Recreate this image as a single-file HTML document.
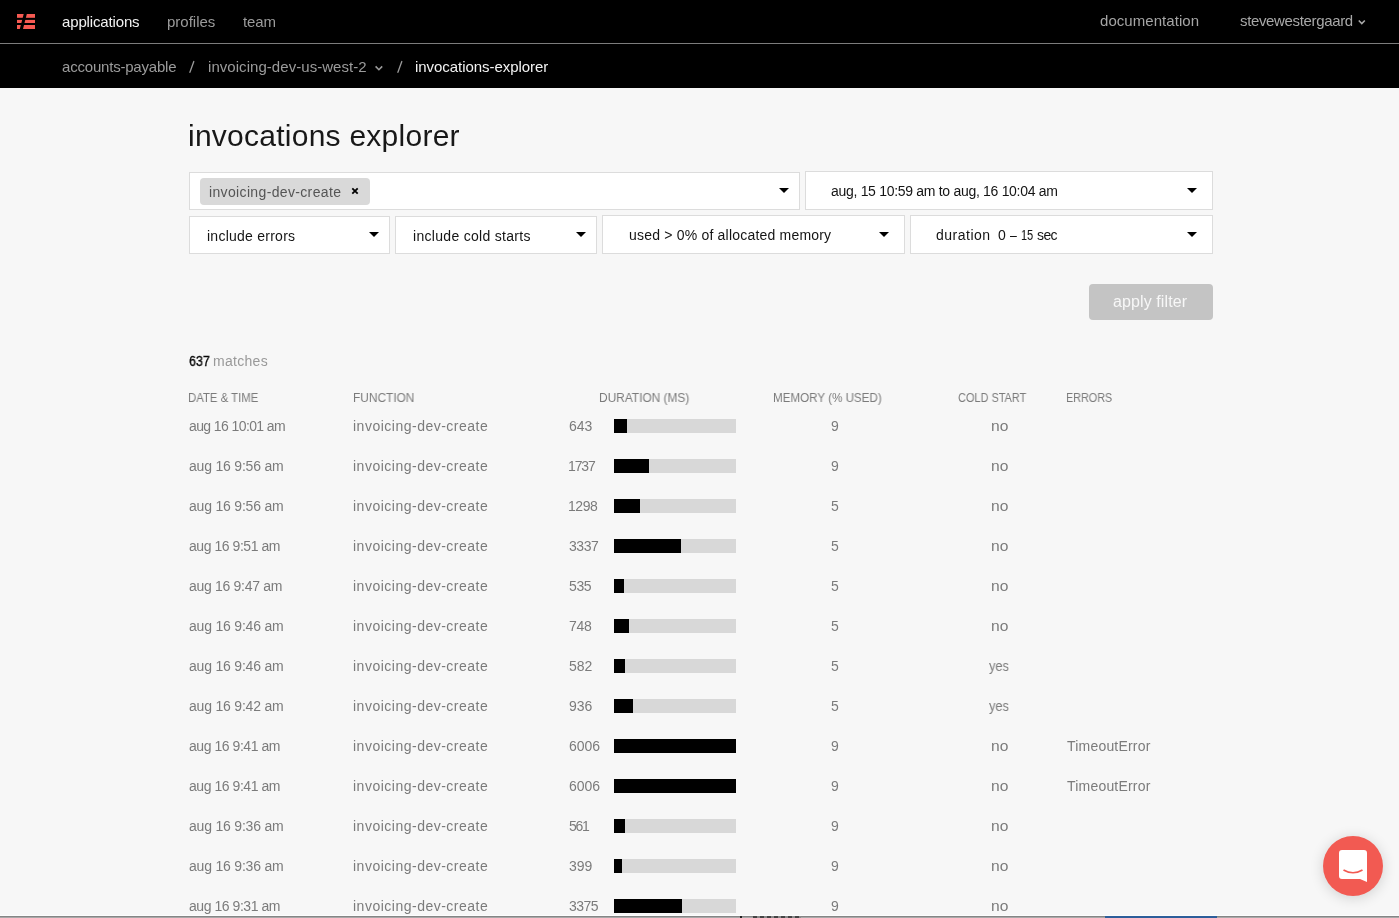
<!DOCTYPE html>
<html><head><meta charset="utf-8"><title>invocations explorer</title>
<style>
html,body{margin:0;padding:0;}
body{width:1399px;height:918px;position:relative;overflow:hidden;background:#f7f7f7;font-family:"Liberation Sans",sans-serif;}
.t{position:absolute;white-space:nowrap;will-change:transform;}
.box{position:absolute;background:#fff;border:1px solid #dcdcdc;box-sizing:border-box;}
.arr{position:absolute;width:0;height:0;border-left:5px solid transparent;border-right:5px solid transparent;border-top:5.5px solid #000;}
.bar{position:absolute;left:614px;width:122px;height:14px;background:#d8d8d8;}
.bar i{position:absolute;left:0;top:0;bottom:0;background:#000;}
</style></head><body>
<div style="position:absolute;left:0;top:0;width:1399px;height:88px;background:#000"></div>
<div style="position:absolute;left:0;top:43px;width:1399px;height:1px;background:#7c7c7c"></div>
<svg style="position:absolute;left:17px;top:14px" width="18" height="15" viewBox="0 0 18 15">
<rect x="0" y="0" width="18" height="3.8" fill="#f65a52"/>
<rect x="0" y="5.9" width="18" height="3.1" fill="#f65a52"/>
<rect x="0" y="11" width="18" height="4" fill="#f65a52"/>
<polygon points="6.7,0 9.8,0 6.0,15 2.8,15" fill="#000"/>
</svg>
<svg style="position:absolute;left:1357px;top:19px" width="9" height="6" viewBox="0 0 9 6"><polyline points="1.8,1.5 4.8,4.6 7.8,1.5" fill="none" stroke="#a8a8a8" stroke-width="1.6"/></svg>
<svg style="position:absolute;left:374.2px;top:65.1px" width="10" height="7" viewBox="0 0 10 7"><polyline points="1.6,1.4 4.9,4.7 8.2,1.4" fill="none" stroke="#9b9b9b" stroke-width="1.6"/></svg>
<svg style="position:absolute;left:189px;top:60px" width="7" height="14" viewBox="0 0 7 14"><line x1="0.9" y1="12.3" x2="4.8" y2="1.5" stroke="#9b9b9b" stroke-width="1.3" stroke-linecap="round"/></svg>
<svg style="position:absolute;left:397px;top:60px" width="7" height="14" viewBox="0 0 7 14"><line x1="0.9" y1="12.3" x2="4.8" y2="1.5" stroke="#9b9b9b" stroke-width="1.3" stroke-linecap="round"/></svg>
<div class="box" style="left:189px;top:172px;width:611px;height:38px"></div>
<div class="box" style="left:805px;top:171px;width:408px;height:39px"></div>
<div class="box" style="left:189px;top:216px;width:201px;height:38px"></div>
<div class="box" style="left:395px;top:216px;width:202px;height:38px"></div>
<div class="box" style="left:602px;top:215px;width:303px;height:39px"></div>
<div class="box" style="left:910px;top:215px;width:303px;height:39px"></div>
<div style="position:absolute;left:200px;top:178px;width:170px;height:27px;background:#d9d9d9;border-radius:4px"></div>
<svg style="position:absolute;left:351px;top:187px" width="8" height="8" viewBox="0 0 8 8"><path d="M1.3,1.3 L6.7,6.7 M6.7,1.3 L1.3,6.7" stroke="#000" stroke-width="1.8"/></svg>
<div class="arr" style="left:779px;top:188px"></div>
<div class="arr" style="left:1187px;top:188px"></div>
<div class="arr" style="left:369px;top:232px"></div>
<div class="arr" style="left:576px;top:232px"></div>
<div class="arr" style="left:879px;top:232px"></div>
<div class="arr" style="left:1187px;top:232px"></div>
<div style="position:absolute;left:1089px;top:284px;width:124px;height:36px;background:#c4c4c4;border-radius:4px"></div>
<div class="bar" style="top:419px"><i style="width:13px"></i></div>
<div class="bar" style="top:459px"><i style="width:35px"></i></div>
<div class="bar" style="top:499px"><i style="width:26px"></i></div>
<div class="bar" style="top:539px"><i style="width:67px"></i></div>
<div class="bar" style="top:579px"><i style="width:10px"></i></div>
<div class="bar" style="top:619px"><i style="width:15px"></i></div>
<div class="bar" style="top:659px"><i style="width:11px"></i></div>
<div class="bar" style="top:699px"><i style="width:19px"></i></div>
<div class="bar" style="top:739px"><i style="width:122px"></i></div>
<div class="bar" style="top:779px"><i style="width:122px"></i></div>
<div class="bar" style="top:819px"><i style="width:11px"></i></div>
<div class="bar" style="top:859px"><i style="width:8px"></i></div>
<div class="bar" style="top:899px"><i style="width:68px"></i></div>
<div class="t" style="left:62.00px;top:14.25px;font-size:15px;line-height:15px;color:#f2f2f2;letter-spacing:-0.150px;">applications</div>
<div class="t" style="left:167.00px;top:14.25px;font-size:15px;line-height:15px;color:#9b9b9b;">profiles</div>
<div class="t" style="left:243.00px;top:14.25px;font-size:15px;line-height:15px;color:#9b9b9b;letter-spacing:-0.100px;">team</div>
<div class="t" style="left:1100.00px;top:13.25px;font-size:15px;line-height:15px;color:#a5a5a5;letter-spacing:0.050px;">documentation</div>
<div class="t" style="left:1240.00px;top:13.25px;font-size:15px;line-height:15px;color:#a8a8a8;letter-spacing:-0.350px;">stevewestergaard</div>
<div class="t" style="left:62.00px;top:59.25px;font-size:15px;line-height:15px;color:#9b9b9b;letter-spacing:-0.200px;">accounts-payable</div>
<div class="t" style="left:208.00px;top:59.25px;font-size:15px;line-height:15px;color:#9b9b9b;letter-spacing:0.050px;">invoicing-dev-us-west-2</div>
<div class="t" style="left:415.00px;top:59.25px;font-size:15px;line-height:15px;color:#f2f2f2;letter-spacing:-0.050px;">invocations-explorer</div>
<div class="t" style="left:188.00px;top:120.50px;font-size:30px;line-height:30px;color:#181818;letter-spacing:0.250px;">invocations explorer</div>
<div class="t" style="left:209.00px;top:185.10px;font-size:14px;line-height:14px;color:#555;letter-spacing:0.350px;">invoicing-dev-create</div>
<div class="t" style="left:831.00px;top:184.10px;font-size:14px;line-height:14px;color:#141414;letter-spacing:-0.300px;">aug, 15 10:59 am to aug, 16 10:04 am</div>
<div class="t" style="left:207.00px;top:229.10px;font-size:14px;line-height:14px;color:#141414;letter-spacing:0.250px;">include errors</div>
<div class="t" style="left:413.00px;top:229.10px;font-size:14px;line-height:14px;color:#141414;letter-spacing:0.300px;">include cold starts</div>
<div class="t" style="left:629.00px;top:228.10px;font-size:14px;line-height:14px;color:#141414;letter-spacing:0.200px;">used &gt; 0% of allocated memory</div>
<div class="t" style="left:936.00px;top:228.10px;font-size:14px;line-height:14px;color:#141414;letter-spacing:0.500px;">duration</div>
<div class="t" style="left:998.00px;top:228.10px;font-size:14px;line-height:14px;color:#141414;">0</div>
<div class="t" style="left:1010.00px;top:228.10px;font-size:14px;line-height:14px;color:#141414;transform:scaleX(0.8875);transform-origin:0 0;">–</div>
<div class="t" style="left:1021.00px;top:228.10px;font-size:14px;line-height:14px;color:#141414;transform:scaleX(0.7786);transform-origin:0 0;">15</div>
<div class="t" style="left:1037.00px;top:228.10px;font-size:14px;line-height:14px;color:#141414;letter-spacing:-0.600px;">sec</div>
<div class="t" style="left:1113.00px;top:294.00px;font-size:16px;line-height:16px;color:#f7f7f7;letter-spacing:0.100px;">apply filter</div>
<div class="t" style="left:189.00px;top:354.10px;font-size:14px;line-height:14px;color:#050505;-webkit-text-stroke:0.3px #050505;transform:scaleX(0.8957);transform-origin:0 0;">637</div>
<div class="t" style="left:213.00px;top:354.10px;font-size:14px;line-height:14px;color:#999;letter-spacing:0.300px;">matches</div>
<div class="t" style="left:188.00px;top:391.80px;font-size:12px;line-height:12px;color:#7b7b7b;transform:scaleX(0.9466);transform-origin:0 0;">DATE &amp; TIME</div>
<div class="t" style="left:353.00px;top:391.80px;font-size:12px;line-height:12px;color:#7b7b7b;transform:scaleX(0.9900);transform-origin:0 0;">FUNCTION</div>
<div class="t" style="left:599.00px;top:391.80px;font-size:12px;line-height:12px;color:#7b7b7b;transform:scaleX(0.9922);transform-origin:0 0;">DURATION (MS)</div>
<div class="t" style="left:773.00px;top:391.80px;font-size:12px;line-height:12px;color:#7b7b7b;transform:scaleX(0.9685);transform-origin:0 0;">MEMORY (% USED)</div>
<div class="t" style="left:958.00px;top:391.80px;font-size:12px;line-height:12px;color:#7b7b7b;transform:scaleX(0.9120);transform-origin:0 0;">COLD START</div>
<div class="t" style="left:1066.00px;top:391.80px;font-size:12px;line-height:12px;color:#7b7b7b;transform:scaleX(0.9000);transform-origin:0 0;">ERRORS</div>
<div class="t" style="left:189.00px;top:419.10px;font-size:14px;line-height:14px;color:#7b7b7b;letter-spacing:-0.600px;">aug 16 10:01 am</div>
<div class="t" style="left:353.00px;top:419.10px;font-size:14px;line-height:14px;color:#7b7b7b;letter-spacing:0.500px;">invoicing-dev-create</div>
<div class="t" style="left:569.00px;top:419.10px;font-size:14px;line-height:14px;color:#7b7b7b;">643</div>
<div class="t" style="left:831.00px;top:419.10px;font-size:14px;line-height:14px;color:#7b7b7b;">9</div>
<div class="t" style="left:991.00px;top:418.25px;font-size:15px;line-height:15px;color:#7b7b7b;transform:scaleX(1.0400);transform-origin:0 0;">no</div>
<div class="t" style="left:189.00px;top:459.10px;font-size:14px;line-height:14px;color:#7b7b7b;letter-spacing:-0.200px;">aug 16 9:56 am</div>
<div class="t" style="left:353.00px;top:459.10px;font-size:14px;line-height:14px;color:#7b7b7b;letter-spacing:0.500px;">invoicing-dev-create</div>
<div class="t" style="left:568.00px;top:459.10px;font-size:14px;line-height:14px;color:#7b7b7b;letter-spacing:-1.100px;">1737</div>
<div class="t" style="left:831.00px;top:459.10px;font-size:14px;line-height:14px;color:#7b7b7b;">9</div>
<div class="t" style="left:991.00px;top:458.25px;font-size:15px;line-height:15px;color:#7b7b7b;transform:scaleX(1.0400);transform-origin:0 0;">no</div>
<div class="t" style="left:189.00px;top:499.10px;font-size:14px;line-height:14px;color:#7b7b7b;letter-spacing:-0.200px;">aug 16 9:56 am</div>
<div class="t" style="left:353.00px;top:499.10px;font-size:14px;line-height:14px;color:#7b7b7b;letter-spacing:0.500px;">invoicing-dev-create</div>
<div class="t" style="left:568.00px;top:499.10px;font-size:14px;line-height:14px;color:#7b7b7b;letter-spacing:-0.450px;">1298</div>
<div class="t" style="left:831.00px;top:499.10px;font-size:14px;line-height:14px;color:#7b7b7b;">5</div>
<div class="t" style="left:991.00px;top:498.25px;font-size:15px;line-height:15px;color:#7b7b7b;transform:scaleX(1.0400);transform-origin:0 0;">no</div>
<div class="t" style="left:189.00px;top:539.10px;font-size:14px;line-height:14px;color:#7b7b7b;letter-spacing:-0.450px;">aug 16 9:51 am</div>
<div class="t" style="left:353.00px;top:539.10px;font-size:14px;line-height:14px;color:#7b7b7b;letter-spacing:0.500px;">invoicing-dev-create</div>
<div class="t" style="left:569.00px;top:539.10px;font-size:14px;line-height:14px;color:#7b7b7b;letter-spacing:-0.450px;">3337</div>
<div class="t" style="left:831.00px;top:539.10px;font-size:14px;line-height:14px;color:#7b7b7b;">5</div>
<div class="t" style="left:991.00px;top:538.25px;font-size:15px;line-height:15px;color:#7b7b7b;transform:scaleX(1.0400);transform-origin:0 0;">no</div>
<div class="t" style="left:189.00px;top:579.10px;font-size:14px;line-height:14px;color:#7b7b7b;letter-spacing:-0.300px;">aug 16 9:47 am</div>
<div class="t" style="left:353.00px;top:579.10px;font-size:14px;line-height:14px;color:#7b7b7b;letter-spacing:0.500px;">invoicing-dev-create</div>
<div class="t" style="left:569.00px;top:579.10px;font-size:14px;line-height:14px;color:#7b7b7b;letter-spacing:-0.350px;">535</div>
<div class="t" style="left:831.00px;top:579.10px;font-size:14px;line-height:14px;color:#7b7b7b;">5</div>
<div class="t" style="left:991.00px;top:578.25px;font-size:15px;line-height:15px;color:#7b7b7b;transform:scaleX(1.0400);transform-origin:0 0;">no</div>
<div class="t" style="left:189.00px;top:619.10px;font-size:14px;line-height:14px;color:#7b7b7b;letter-spacing:-0.200px;">aug 16 9:46 am</div>
<div class="t" style="left:353.00px;top:619.10px;font-size:14px;line-height:14px;color:#7b7b7b;letter-spacing:0.500px;">invoicing-dev-create</div>
<div class="t" style="left:569.00px;top:619.10px;font-size:14px;line-height:14px;color:#7b7b7b;letter-spacing:-0.250px;">748</div>
<div class="t" style="left:831.00px;top:619.10px;font-size:14px;line-height:14px;color:#7b7b7b;">5</div>
<div class="t" style="left:991.00px;top:618.25px;font-size:15px;line-height:15px;color:#7b7b7b;transform:scaleX(1.0400);transform-origin:0 0;">no</div>
<div class="t" style="left:189.00px;top:659.10px;font-size:14px;line-height:14px;color:#7b7b7b;letter-spacing:-0.200px;">aug 16 9:46 am</div>
<div class="t" style="left:353.00px;top:659.10px;font-size:14px;line-height:14px;color:#7b7b7b;letter-spacing:0.500px;">invoicing-dev-create</div>
<div class="t" style="left:569.00px;top:659.10px;font-size:14px;line-height:14px;color:#7b7b7b;">582</div>
<div class="t" style="left:831.00px;top:659.10px;font-size:14px;line-height:14px;color:#7b7b7b;">5</div>
<div class="t" style="left:989.00px;top:659.10px;font-size:14px;line-height:14px;color:#7b7b7b;transform:scaleX(0.9136);transform-origin:0 0;">yes</div>
<div class="t" style="left:189.00px;top:699.10px;font-size:14px;line-height:14px;color:#7b7b7b;letter-spacing:-0.200px;">aug 16 9:42 am</div>
<div class="t" style="left:353.00px;top:699.10px;font-size:14px;line-height:14px;color:#7b7b7b;letter-spacing:0.500px;">invoicing-dev-create</div>
<div class="t" style="left:569.00px;top:699.10px;font-size:14px;line-height:14px;color:#7b7b7b;">936</div>
<div class="t" style="left:831.00px;top:699.10px;font-size:14px;line-height:14px;color:#7b7b7b;">5</div>
<div class="t" style="left:989.00px;top:699.10px;font-size:14px;line-height:14px;color:#7b7b7b;transform:scaleX(0.9136);transform-origin:0 0;">yes</div>
<div class="t" style="left:189.00px;top:739.10px;font-size:14px;line-height:14px;color:#7b7b7b;letter-spacing:-0.450px;">aug 16 9:41 am</div>
<div class="t" style="left:353.00px;top:739.10px;font-size:14px;line-height:14px;color:#7b7b7b;letter-spacing:0.500px;">invoicing-dev-create</div>
<div class="t" style="left:569.00px;top:739.10px;font-size:14px;line-height:14px;color:#7b7b7b;">6006</div>
<div class="t" style="left:831.00px;top:739.10px;font-size:14px;line-height:14px;color:#7b7b7b;">9</div>
<div class="t" style="left:991.00px;top:738.25px;font-size:15px;line-height:15px;color:#7b7b7b;transform:scaleX(1.0400);transform-origin:0 0;">no</div>
<div class="t" style="left:1067.00px;top:739.10px;font-size:14px;line-height:14px;color:#7b7b7b;letter-spacing:0.200px;">TimeoutError</div>
<div class="t" style="left:189.00px;top:779.10px;font-size:14px;line-height:14px;color:#7b7b7b;letter-spacing:-0.450px;">aug 16 9:41 am</div>
<div class="t" style="left:353.00px;top:779.10px;font-size:14px;line-height:14px;color:#7b7b7b;letter-spacing:0.500px;">invoicing-dev-create</div>
<div class="t" style="left:569.00px;top:779.10px;font-size:14px;line-height:14px;color:#7b7b7b;">6006</div>
<div class="t" style="left:831.00px;top:779.10px;font-size:14px;line-height:14px;color:#7b7b7b;">9</div>
<div class="t" style="left:991.00px;top:778.25px;font-size:15px;line-height:15px;color:#7b7b7b;transform:scaleX(1.0400);transform-origin:0 0;">no</div>
<div class="t" style="left:1067.00px;top:779.10px;font-size:14px;line-height:14px;color:#7b7b7b;letter-spacing:0.200px;">TimeoutError</div>
<div class="t" style="left:189.00px;top:819.10px;font-size:14px;line-height:14px;color:#7b7b7b;letter-spacing:-0.200px;">aug 16 9:36 am</div>
<div class="t" style="left:353.00px;top:819.10px;font-size:14px;line-height:14px;color:#7b7b7b;letter-spacing:0.500px;">invoicing-dev-create</div>
<div class="t" style="left:569.00px;top:819.10px;font-size:14px;line-height:14px;color:#7b7b7b;letter-spacing:-1.250px;">561</div>
<div class="t" style="left:831.00px;top:819.10px;font-size:14px;line-height:14px;color:#7b7b7b;">9</div>
<div class="t" style="left:991.00px;top:818.25px;font-size:15px;line-height:15px;color:#7b7b7b;transform:scaleX(1.0400);transform-origin:0 0;">no</div>
<div class="t" style="left:189.00px;top:859.10px;font-size:14px;line-height:14px;color:#7b7b7b;letter-spacing:-0.200px;">aug 16 9:36 am</div>
<div class="t" style="left:353.00px;top:859.10px;font-size:14px;line-height:14px;color:#7b7b7b;letter-spacing:0.500px;">invoicing-dev-create</div>
<div class="t" style="left:569.00px;top:859.10px;font-size:14px;line-height:14px;color:#7b7b7b;">399</div>
<div class="t" style="left:831.00px;top:859.10px;font-size:14px;line-height:14px;color:#7b7b7b;">9</div>
<div class="t" style="left:991.00px;top:858.25px;font-size:15px;line-height:15px;color:#7b7b7b;transform:scaleX(1.0400);transform-origin:0 0;">no</div>
<div class="t" style="left:189.00px;top:899.10px;font-size:14px;line-height:14px;color:#7b7b7b;letter-spacing:-0.450px;">aug 16 9:31 am</div>
<div class="t" style="left:353.00px;top:899.10px;font-size:14px;line-height:14px;color:#7b7b7b;letter-spacing:0.500px;">invoicing-dev-create</div>
<div class="t" style="left:569.00px;top:899.10px;font-size:14px;line-height:14px;color:#7b7b7b;letter-spacing:-0.500px;">3375</div>
<div class="t" style="left:831.00px;top:899.10px;font-size:14px;line-height:14px;color:#7b7b7b;">9</div>
<div class="t" style="left:991.00px;top:898.25px;font-size:15px;line-height:15px;color:#7b7b7b;transform:scaleX(1.0400);transform-origin:0 0;">no</div>
<div style="position:absolute;left:0;top:915px;width:1399px;height:1px;background:#fdfdfd"></div>
<div style="position:absolute;left:0;top:916px;width:1399px;height:1px;background:#858585"></div>
<div style="position:absolute;left:0;top:917px;width:1399px;height:1px;background:#a8a8a8"></div>
<div style="position:absolute;left:1105px;top:916px;width:112px;height:2px;background:#2d5e9a"></div>
<div style="position:absolute;left:740px;top:916px;width:2px;height:2px;background:#222"></div>
<div style="position:absolute;left:753px;top:916px;width:48px;height:2px;background:repeating-linear-gradient(90deg,#444 0 4px,#8a8a8a 4px 7px)"></div>
<div style="position:absolute;left:1323px;top:836px;width:60px;height:60px;border-radius:50%;background:#f25a52;box-shadow:0 2px 14px rgba(0,0,0,0.16)"></div>
<svg style="position:absolute;left:1339px;top:850px" width="29" height="33" viewBox="0 0 29 33">
<path d="M3,0 H25 Q28,0 28,3 V32 L21,29 H3 Q0,29 0,26 V3 Q0,0 3,0 Z" fill="#fff"/>
<path d="M4.5,20 Q14,25.5 23.5,20" fill="none" stroke="#f25a52" stroke-width="1.7"/>
</svg>
</body></html>
